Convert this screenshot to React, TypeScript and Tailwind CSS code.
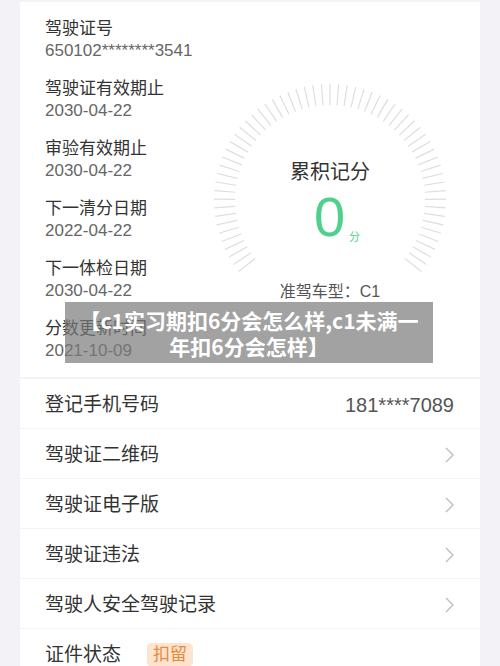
import { ReactNode } from "react"

const font = { fontFamily: '"Liberation Sans", "Noto Sans CJK SC", sans-serif' }

const infoItems = [
  { label: "驾驶证号", value: "650102********3541" },
  { label: "驾驶证有效期止", value: "2030-04-22" },
  { label: "审验有效期止", value: "2030-04-22" },
  { label: "下一清分日期", value: "2022-04-22" },
  { label: "下一体检日期", value: "2030-04-22" },
  { label: "分数更新时间", value: "2021-10-09" },
]

function Gauge() {
  const ticks = []
  const count = 61
  for (let i = 0; i < count; i++) {
    const deg = -128 + (256 / (count - 1)) * i
    const rad = (deg * Math.PI) / 180
    const x1 = 120 + Math.sin(rad) * 95
    const y1 = 120 - Math.cos(rad) * 95
    const x2 = 120 + Math.sin(rad) * 116
    const y2 = 120 - Math.cos(rad) * 116
    ticks.push(
      <line key={i} x1={x1} y1={y1} x2={x2} y2={y2} stroke="#dedede" strokeWidth="1.2" />
    )
  }

  return (
    <div className="relative w-[240px] h-[240px]">
      <svg width="240" height="240" viewBox="0 0 240 240">
        {ticks}
      </svg>
      <div className="absolute inset-0 flex flex-col items-center">
        <span className="mt-[80px] text-[20px] leading-[24px] text-[#333]">累积记分</span>
        <div className="flex items-end mt-[8px] ml-[14px]">
          <span className="text-[56px] leading-[50px] text-[#4fd08c]">0</span>
          <span className="text-[11px] leading-[14px] text-[#4fd08c] ml-[4px] mb-[-2px]">分</span>
        </div>
        <span className="mt-[40px] text-[16px] leading-[20px] text-[#555]">准驾车型：C1</span>
      </div>
    </div>
  )
}

function Row({ children, right }: { children: ReactNode; right?: ReactNode }) {
  return (
    <div className="flex items-center justify-between bg-white h-[48.5px] pl-[25px] pr-[26px] pt-[4px]">
      <div className="flex items-center text-[19px] text-[#333]">{children}</div>
      {right}
    </div>
  )
}

function Chevron() {
  return (
    <svg width="12" height="18" viewBox="0 0 12 18" className="mr-[-2px]">
      <polyline points="2,2 9,9 2,16" fill="none" stroke="#bdbdbd" strokeWidth="1.4" />
    </svg>
  )
}

export default function App() {
  return (
    <div
      className="relative w-[500px] h-[666px] overflow-hidden bg-[#f3f3f7] pt-[2px] px-[20px]"
      style={font}
    >
      <div className="flex bg-white h-[375px]">
        <div className="flex flex-col pl-[25px] pt-[16px] w-[190px] shrink-0">
          {infoItems.map((item) => (
            <div key={item.label} className="flex flex-col mb-[16px]">
              <span className="text-[17px] leading-[22px] text-[#333] whitespace-nowrap">{item.label}</span>
              <span className="text-[17px] leading-[22px] text-[#666] whitespace-nowrap">{item.value}</span>
            </div>
          ))}
        </div>
        <div className="flex-1 pt-[78px]">
          <Gauge />
        </div>
      </div>

      <div className="flex flex-col gap-[1.5px] mt-[2px]">
        <Row right={<span className="text-[20px] text-[#555]">181****7089</span>}>登记手机号码</Row>
        <Row right={<Chevron />}>驾驶证二维码</Row>
        <Row right={<Chevron />}>驾驶证电子版</Row>
        <Row right={<Chevron />}>驾驶证违法</Row>
        <Row right={<Chevron />}>驾驶人安全驾驶记录</Row>
        <Row>
          证件状态
          <span className="ml-[26px] bg-[#fde4cf] text-[#e8893c] text-[17px] leading-[24px] px-[6px] rounded-[5px]">
            扣留
          </span>
        </Row>
      </div>

      <div className="absolute left-[65px] top-[302px] w-[368px] h-[61px] bg-[#7a7a7a]/70 flex flex-col items-center justify-center">
        <span
          className="text-white font-bold text-[21px] leading-[26px] whitespace-nowrap"
          style={{ fontFamily: '"Noto Sans CJK SC", sans-serif' }}
        >
          【c1实习期扣6分会怎么样,c1未满一
        </span>
        <span
          className="text-white font-bold text-[21px] leading-[26px] whitespace-nowrap"
          style={{ fontFamily: '"Noto Sans CJK SC", sans-serif' }}
        >
          年扣6分会怎样】
        </span>
      </div>
    </div>
  )
}
